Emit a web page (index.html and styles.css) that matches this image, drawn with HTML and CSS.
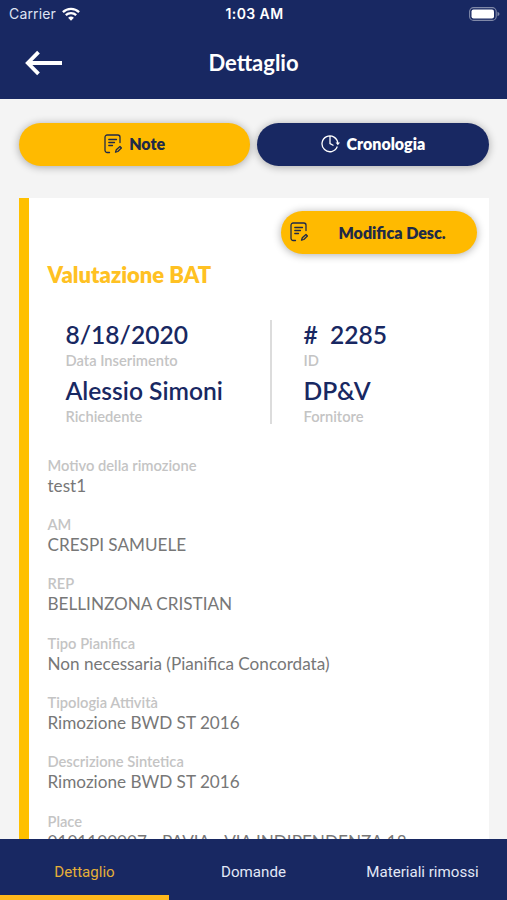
FILE: index.html
```
<!DOCTYPE html>
<html lang="it">
<head>
<meta charset="utf-8">
<title>Dettaglio</title>
<link rel="stylesheet" href="styles.css">
</head>
<body>
<svg width="0" height="0" class="defs">
  <symbol id="note" viewBox="0 0 18 20">
    <path d="M5.500 18.500H3.200A2.200 2.200 0 0 1 1 16.300V3.200A2.200 2.200 0 0 1 3.200 1H13.800A2.200 2.200 0 0 1 16 3.200V8.500M4.800 5.500H12.500M4.800 8.500H10.500M4.800 11.500H8.500M11.500 18.200L12.300 15.800L16 12.500L17.400 14L13.800 17.500Z" fill="none" stroke="currentColor" stroke-width="1.300" stroke-linecap="round" stroke-linejoin="round"/>
  </symbol>
</svg>
<div class="screen">
  <header class="header">
    <div class="status">
      <div class="carrier"><span>Carrier</span>
        <svg width="18" height="14" viewBox="0 0 18 14"><g fill="none" stroke="#fff" stroke-width="2.300"><path d="M.9 5.100A11.600 11.600 0 0 1 17.100 5.100"/><path d="M3.800 8.200A7.500 7.500 0 0 1 14.200 8.200"/></g><path d="M6.100 10.800A4.200 4.200 0 0 1 11.900 10.800L9 13.700Z" fill="#fff"/></svg>
      </div>
      <div class="time">1:03 AM</div>
      <div class="battery"><svg width="31" height="14" viewBox="0 0 31 14"><rect x=".6" y=".6" width="26.600" height="12.800" rx="4" fill="none" stroke="#fff" stroke-opacity=".45" stroke-width="1.100"/><rect x="2.500" y="2.500" width="22.500" height="9" rx="2" fill="#fff"/><path d="M28.500 4.700Q30.500 5.500 30.500 7T28.500 9.300Z" fill="#fff" fill-opacity=".45"/></svg></div>
    </div>
    <div class="bar">
      <svg class="back" width="38" height="26" viewBox="0 0 38 26"><path d="M13.500 2.200L2.800 13L13.500 23.800M3 13H37" fill="none" stroke="#fff" stroke-width="3.800"/></svg>
      <h1>Dettaglio</h1>
    </div>
  </header>
  <main class="content">
    <div class="actions">
      <button class="btn"><svg class="icon"><use href="#note"/></svg>Note</button>
      <button class="btn navy"><svg class="clock" viewBox="0 0 19 18"><path d="M16.300 11.600A7.900 7.900 0 1 1 16.800 8.500M9 1V8.500L12.500 10.500" fill="none" stroke="#fff" stroke-width="1.300"/><path d="M14.600 7.500H19L16.800 10.200Z" fill="#fff"/></svg>Cronologia</button>
    </div>
    <section class="card">
      <button class="btn edit"><svg class="icon"><use href="#note"/></svg><span>Modifica Desc.</span></button>
      <h2>Valutazione BAT</h2>
      <div class="summary">
        <div class="col">
          <strong>8/18/2020</strong><small>Data Inserimento</small>
          <strong>Alessio Simoni</strong><small>Richiedente</small>
        </div>
        <div class="col right">
          <strong class="num">#&nbsp; 2285</strong><small>ID</small>
          <strong>DP&amp;V</strong><small>Fornitore</small>
        </div>
      </div>
      <dl>
        <dt>Motivo della rimozione</dt><dd>test1</dd>
        <dt>AM</dt><dd>CRESPI SAMUELE</dd>
        <dt>REP</dt><dd>BELLINZONA CRISTIAN</dd>
        <dt>Tipo Pianifica</dt><dd>Non necessaria (Pianifica Concordata)</dd>
        <dt>Tipologia Attività</dt><dd>Rimozione BWD ST 2016</dd>
        <dt>Descrizione Sintetica</dt><dd>Rimozione BWD ST 2016</dd>
        <dt>Place</dt><dd>0101100007 - PAVIA - VIA INDIPENDENZA 18</dd>
      </dl>
    </section>
  </main>
  <nav class="tabs">
    <a class="active">Dettaglio</a><a>Domande</a><a>Materiali rimossi</a>
  </nav>
</div>
</body>
</html>
```
FILE: styles.css
```
* { box-sizing: border-box; }
body { margin: 0; font-family: Lato, sans-serif; background: #f4f4f4; }
.defs { display: none; }
.screen { width: 507px; height: 900px; display: flex; flex-direction: column; overflow: hidden; }
.header { height: 98.500px; flex: none; background: #182862; color: #fff; }
.status { height: 27px; display: grid; grid-template-columns: 1fr auto 1fr; align-items: center; padding: 0 7px 0 9px; font-family: Inter, sans-serif; font-size: 14px; }
.carrier { display: flex; align-items: center; gap: 6px; color: #dfe3f2; letter-spacing: .15px; }
.time { font-weight: 600; letter-spacing: .4px; }
.battery { display: flex; justify-content: flex-end; }
.bar { height: 71px; display: grid; grid-template-columns: 1fr auto 1fr; align-items: center; padding: 0 25px; }
h1 { margin: 0; font-size: 22px; font-weight: 700; line-height: 30px; }
.content { flex: 1; min-height: 0; overflow: hidden; padding: 24.500px 18.500px 0 19px; }
.actions { display: grid; grid-template-columns: 1fr 1fr; gap: 7px; }
.btn { height: 43px; display: flex; align-items: center; justify-content: center; gap: 7px; border: 0; border-radius: 22px; background: #ffba00; color: #202a48; font: 800 16px Lato, sans-serif; box-shadow: 0 1px 8px rgba(0,0,0,.32); padding: 0 0 2px; }
.navy { background: #182862; color: #fff; }
.icon { width: 18px; height: 20px; flex: none; }
.clock { width: 19px; height: 18px; }
.card { margin-top: 31.500px; height: 800px; background: #fff; border-left: 10px solid #ffc000; padding: 13px 12px 0 18.500px; }
.edit { width: 196px; margin-left: auto; justify-content: flex-start; padding-left: 9px; padding-bottom: 0; gap: 31px; }
h2 { margin: 7px 0 0; font-size: 22px; line-height: 27px; font-weight: 800; color: #ffc123; }
.summary { display: grid; grid-template-columns: 222px 1fr; margin-top: 32px; height: 104px; }
.col { height: 104px; display: flex; flex-direction: column; padding-left: 18px; }
.right { border-left: 2px solid #dcdcdc; padding-left: 32px; }
strong { flex: none; font-size: 24.600px; line-height: 30px; font-weight: 600; color: #182862; white-space: nowrap; }
small { flex: none; font-size: 14.700px; line-height: 20px; height: 26px; font-weight: 600; color: #c4c4c4; }
dl { margin: 31px 0 0; }
dt { font-size: 14.700px; line-height: 20px; font-weight: 600; color: #c4c4c4; }
dd { margin: 0 0 18.400px; font-size: 17.150px; line-height: 21px; color: #777; white-space: nowrap; }
.tabs { height: 61px; flex: none; display: grid; grid-template-columns: repeat(3, 1fr); background: #182862; color: #e3e8f7; font-family: Roboto, sans-serif; font-size: 15.100px; }
.tabs a { display: flex; align-items: center; justify-content: center; border-bottom: 5px solid transparent; padding: 9px 0 0; }
.tabs .active { color: #e5af38; border-color: #ffb81c; }
```
